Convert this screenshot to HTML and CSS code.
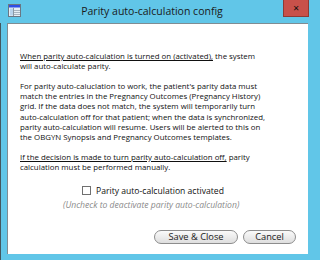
FILE: index.html
```html
<!DOCTYPE html>
<html>
<head>
<meta charset="utf-8">
<link rel="stylesheet" href="styles.css">
</head>
<body>
<div class="window">
  <div class="titlebar">
    <svg class="app-icon" width="13" height="13" viewBox="0 0 13 13">
      <rect x="0.5" y="0.5" width="12" height="12" fill="#e6eef5" stroke="#6a7784"/>
      <rect x="1" y="1" width="11" height="2.5" fill="#2f4fe6"/>
      <rect x="2" y="4.5" width="3" height="7" fill="#b9d3ec"/>
      <line x1="5.5" y1="4" x2="5.5" y2="12" stroke="#8b98a5" stroke-width="1"/>
      <line x1="6" y1="6.5" x2="12" y2="6.5" stroke="#a7b4c0" stroke-width="1"/>
      <line x1="6" y1="8.5" x2="12" y2="8.5" stroke="#a7b4c0" stroke-width="1"/>
      <line x1="6" y1="10.5" x2="12" y2="10.5" stroke="#a7b4c0" stroke-width="1"/>
    </svg>
    <div class="title">Parity auto-calculation config</div>
    <div class="close">&#x2715;</div>
  </div>
  <div class="client">
    <div class="panel">
      <p class="para"><span class="u">When parity auto-calculation is turned on (activated),</span> the system<br>will auto-calculate parity.</p>
      <p class="para">For parity auto-caluclation to work, the patient's parity data must<br>match the entries in the Pregnancy Outcomes (Pregnancy History)<br>grid. If the data does not match, the system will temporarily turn<br>auto-calculation off for that patient; when the data is synchronized,<br>parity auto-calculation will resume. Users will be alerted to this on<br>the OBGYN Synopsis and Pregnancy Outcomes templates.</p>
      <p class="para"><span class="u">If the decision is made to turn parity auto-calculation off,</span> parity<br>calculation must be performed manually.</p>
      <div class="check-row">
        <span class="checkbox"></span>
        <span class="check-label">Parity auto-calculation activated</span>
      </div>
      <div class="hint">(Uncheck to deactivate parity auto-calculation)</div>
      <div class="buttons">
        <button class="btn btn-save">Save &amp; Close</button>
        <button class="btn btn-cancel">Cancel</button>
      </div>
    </div>
  </div>
</div>
</body>
</html>
```
FILE: styles.css
```css
html, body {
  margin: 0;
  padding: 0;
}
body {
  width: 315px;
  height: 260px;
  overflow: hidden;
  background: #61c6e8;
  font-family: "Open Sans", "Noto Sans", sans-serif;
  color: #111;
}
.window {
  width: 315px;
  height: 260px;
  display: flex;
  flex-direction: column;
}
.titlebar {
  height: 23px;
  display: flex;
  align-items: center;
}
.app-icon {
  margin-left: 8px;
  margin-top: -3px;
  flex: none;
}
.title {
  flex: 1;
  text-align: center;
  font-size: 10.5px;
  color: #1a1a1a;
  margin-top: -1px;
}
.close {
  width: 26px;
  height: 17px;
  margin-right: 6px;
  align-self: flex-start;
  background: #c8514a;
  border: 1px solid #8e3a35;
  border-top: none;
  box-sizing: border-box;
  color: #111;
  font-size: 8px;
  font-weight: bold;
  display: flex;
  align-items: center;
  justify-content: center;
  font-family: "DejaVu Sans", sans-serif;
}
.client {
  height: 237px;
  border-left: 1px solid #44565e;
  padding-left: 6px;
  box-sizing: border-box;
}
.panel {
  width: 301px;
  height: 231px;
  background: #fff;
  border-top: 1px solid #7f8c93;
  border-left: 1px solid #7f8c93;
  box-sizing: border-box;
  padding: 27px 0 0 12px;
  font-size: 7.85px;
  line-height: 10.3px;
  display: flex;
  flex-direction: column;
}
.para {
  margin: 0 0 9.3px 0;
  white-space: nowrap;
}
.u {
  text-decoration: underline;
}
.check-row {
  margin-top: 4px;
  display: flex;
  align-items: center;
  padding-left: 62px;
  height: 10px;
  font-size: 8.6px;
}
.checkbox {
  width: 7px;
  height: 7px;
  border: 1px solid #707070;
  background: #fff;
  margin-right: 5px;
}
.hint {
  margin-top: 4px;
  height: 10px;
  padding-left: 43px;
  font-style: italic;
  font-size: 8.6px;
  color: #8a8a8a;
}
.buttons {
  margin-top: 20px;
  display: flex;
  justify-content: flex-end;
  gap: 5px;
  padding-right: 12px;
}
.btn {
  height: 14px;
  padding: 0;
  border: 1px solid #8d8d8d;
  border-radius: 7px;
  background: linear-gradient(#fafafa, #dedede);
  font-family: "Open Sans", "Noto Sans", sans-serif;
  font-size: 9.3px;
  line-height: 12px;
  color: #1a1a1a;
}
.btn-save {
  width: 84px;
}
.btn-cancel {
  width: 53px;
}
```
